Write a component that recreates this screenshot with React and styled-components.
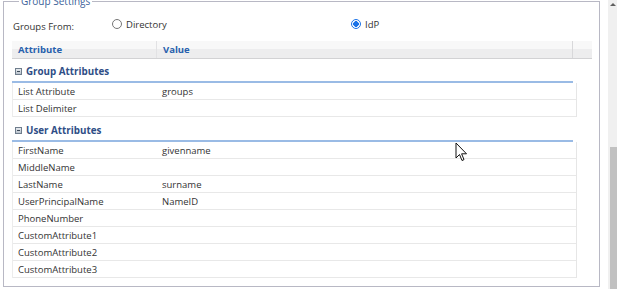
import React from "react";
import styled, { createGlobalStyle } from "styled-components";

const GlobalStyle = createGlobalStyle`
  html, body {
    margin: 0;
    padding: 0;
    background: #fff;
    overflow: hidden;
  }
  body {
    font-family: "Open Sans", "Liberation Sans", Arial, sans-serif;
    font-size: 9.5px;
    color: #333;
  }
`;

const Page = styled.div`
  display: flex;
  height: 289px;
  width: 617px;
  overflow: hidden;
  position: relative;
`;

const Content = styled.div`
  flex: 0 0 608px;
  padding-left: 3px;
  box-sizing: border-box;
`;

const Fieldset = styled.fieldset`
  margin: -6px 0 0 0;
  width: 597px;
  box-sizing: border-box;
  border: 1px solid #b8b8c4;
  padding: 0 7px 8px 8px;
  min-width: 0;
`;

const Legend = styled.legend`
  margin-left: 7px;
  padding: 0 2px;
  line-height: 14px;
  color: #3b5f99;
  font-size: 10px;
`;

const FromRow = styled.div`
  display: grid;
  grid-template-columns: 100px 239px auto;
  align-items: center;
  height: 20px;
  margin-top: 6px;
`;

const FromLabel = styled.span`
  padding-left: 1px;
  margin-top: 5px;
  color: #333;
`;

const RadioLabel = styled.label`
  display: flex;
  align-items: center;
  gap: 4px;
  color: #333;
`;

const RadioDot = styled.span`
  width: 10px;
  height: 10px;
  box-sizing: border-box;
  border-radius: 50%;
  border: 1px solid ${(p) => (p.$checked ? "#1a73e8" : "#767676")};
  background: ${(p) =>
    p.$checked ? "radial-gradient(circle, #1a73e8 0 2.6px, #fff 3px)" : "#fff"};
`;

const Grid = styled.div`
  margin-top: 7px;
`;

const HeaderRow = styled.div`
  display: grid;
  grid-template-columns: 145px 416px 1fr;
  height: 18px;
  box-sizing: border-box;
  background: linear-gradient(#f8f8f8 0 50%, #ededee 50% 100%);
  border-bottom: 1px solid #d2d2d4;
`;

const HeaderCell = styled.div`
  display: flex;
  align-items: center;
  padding-left: 6px;
  font-weight: 700;
  color: #2760ad;
  border-right: ${(p) => (p.$last ? "none" : "1px solid #d8d8da")};
  &:first-child {
    border-right: 1px solid #e2e2e4;
  }
`;

const Section = styled.div`
  width: 561px;
  padding-top: ${(p) => p.$top}px;
`;

const SectionTitle = styled.div`
  display: flex;
  align-items: center;
  gap: 4px;
  height: 20px;
  padding-left: 3px;
  font-weight: 700;
  font-size: 9.8px;
  color: #2f4e86;
  border-bottom: 2px solid #9abbe5;
`;

const Toggle = styled.span`
  width: 7px;
  height: 7px;
  box-sizing: border-box;
  border: 1px solid #6f7d8c;
  background: linear-gradient(#e8ecf0, #b9c2cc);
  position: relative;
  &::after {
    content: "";
    position: absolute;
    left: 1px;
    right: 1px;
    top: 2px;
    height: 1px;
    background: #3d4a58;
  }
`;

const Rows = styled.div`
  width: 563px;
  border-left: 1px solid #ececec;
  border-right: 1px solid #e6e6e6;
`;

const Row = styled.div`
  display: grid;
  grid-template-columns: 144px 1fr;
  height: 17px;
  box-sizing: border-box;
  border-bottom: 1px solid #e8e8e8;
  align-items: center;
`;

const Cell = styled.div`
  padding-left: 5px;
  color: #333;
  white-space: nowrap;
`;

const Scrollbar = styled.div`
  flex: 0 0 9px;
  background: #f0f0f0;
  display: flex;
  flex-direction: column;
  align-items: flex-end;
`;

const ArrowUp = styled.div`
  width: 0;
  height: 0;
  margin: 3px 1px 0 0;
  border-left: 3px solid transparent;
  border-right: 3px solid transparent;
  border-bottom: 3px solid #606060;
`;

const Thumb = styled.div`
  width: 7px;
  margin-top: 141px;
  flex: 1;
  background: #c1c1c1;
`;

const Cursor = styled.svg`
  position: absolute;
  left: 455px;
  top: 142px;
`;

const groupRows = [
  ["List Attribute", "groups"],
  ["List Delimiter", ""],
];

const userRows = [
  ["FirstName", "givenname"],
  ["MiddleName", ""],
  ["LastName", "surname"],
  ["UserPrincipalName", "NameID"],
  ["PhoneNumber", ""],
  ["CustomAttribute1", ""],
  ["CustomAttribute2", ""],
  ["CustomAttribute3", ""],
];

function AttrSection({ title, rows, top }) {
  return (
    <Section $top={top}>
      <SectionTitle>
        <Toggle />
        {title}
      </SectionTitle>
      <Rows>
        {rows.map(([a, v]) => (
          <Row key={a}>
            <Cell>{a}</Cell>
            <Cell>{v}</Cell>
          </Row>
        ))}
      </Rows>
    </Section>
  );
}

export default function App() {
  return (
    <Page>
      <GlobalStyle />
      <Content>
        <Fieldset>
          <Legend>Group Settings</Legend>
          <FromRow>
            <FromLabel>Groups From:</FromLabel>
            <RadioLabel>
              <RadioDot />
              Directory
            </RadioLabel>
            <RadioLabel>
              <RadioDot $checked />
              IdP
            </RadioLabel>
          </FromRow>
          <Grid>
            <HeaderRow>
              <HeaderCell>Attribute</HeaderCell>
              <HeaderCell>Value</HeaderCell>
              <HeaderCell $last />
            </HeaderRow>
            <AttrSection title="Group Attributes" rows={groupRows} top={2} />
            <AttrSection title="User Attributes" rows={userRows} top={3} />
          </Grid>
        </Fieldset>
      </Content>
      <Scrollbar>
        <ArrowUp />
        <Thumb />
      </Scrollbar>
      <Cursor width="13" height="20" viewBox="0 0 13 20">
        <path
          d="M1 1 L1 16 L4.5 12.5 L7 18.5 L9 17.6 L6.6 11.8 L11.5 11.8 Z"
          fill="#fff"
          stroke="#111"
          strokeWidth="1"
          strokeLinejoin="miter"
        />
      </Cursor>
    </Page>
  );
}
